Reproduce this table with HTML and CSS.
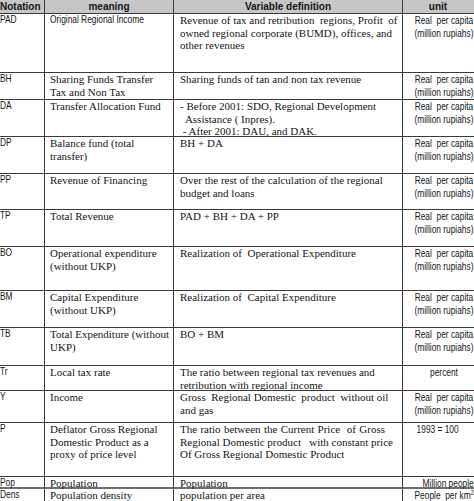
FILE: index.html
```html
<!DOCTYPE html>
<html>
<head>
<meta charset="utf-8">
<link rel="stylesheet" href="styles.css">
</head>
<body>
<div class="table">
  <div class="c hd n">Notation</div>
  <div class="c hd m">meaning</div>
  <div class="c hd d">Variable definition</div>
  <div class="c hd u">unit</div>

  <div class="c n"><span class="sq">PAD</span></div>
  <div class="c m sans"><span class="sq">Original Regional Income</span></div>
  <div class="c d"><span class="j">Revenue of tax and retribution&nbsp; regions, Profit&nbsp; of</span><span class="j">owned regional corporate (BUMD), offices, and</span>other revenues</div>
  <div class="c u"><span class="sq">Real&nbsp; per capita<br>(million rupiahs)</span></div>

  <div class="c n"><span class="sq">BH</span></div>
  <div class="c m">Sharing Funds Transfer<br>Tax and Non Tax</div>
  <div class="c d">Sharing funds of tan and non tax revenue</div>
  <div class="c u"><span class="sq">Real&nbsp; per capita<br>(million rupiahs)</span></div>

  <div class="c n"><span class="sq">DA</span></div>
  <div class="c m">Transfer Allocation Fund</div>
  <div class="c d">- Before 2001: SDO, Regional Development<br>&nbsp; Assistance ( Inpres).<br>&nbsp;- After 2001: DAU, and DAK.</div>
  <div class="c u"><span class="sq">Real&nbsp; per capita<br>(million rupiahs)</span></div>

  <div class="c n"><span class="sq">DP</span></div>
  <div class="c m">Balance fund (total<br>transfer)</div>
  <div class="c d">BH + DA</div>
  <div class="c u"><span class="sq">Real&nbsp; per capita<br>(million rupiahs)</span></div>

  <div class="c n"><span class="sq">PP</span></div>
  <div class="c m">Revenue of Financing</div>
  <div class="c d">Over the rest of the calculation of the regional<br>budget and loans</div>
  <div class="c u"><span class="sq">Real&nbsp; per capita<br>(million rupiahs)</span></div>

  <div class="c n"><span class="sq">TP</span></div>
  <div class="c m">Total Revenue</div>
  <div class="c d">PAD + BH + DA + PP</div>
  <div class="c u"><span class="sq">Real&nbsp; per capita<br>(million rupiahs)</span></div>

  <div class="c n"><span class="sq">BO</span></div>
  <div class="c m">Operational expenditure<br>(without UKP)</div>
  <div class="c d">Realization of&nbsp; Operational Expenditure</div>
  <div class="c u"><span class="sq">Real&nbsp; per capita<br>(million rupiahs)</span></div>

  <div class="c n"><span class="sq">BM</span></div>
  <div class="c m">Capital Expenditure<br>(without UKP)</div>
  <div class="c d">Realization of&nbsp; Capital Expenditure</div>
  <div class="c u"><span class="sq">Real&nbsp; per capita<br>(million rupiahs)</span></div>

  <div class="c n"><span class="sq">TB</span></div>
  <div class="c m">Total Expenditure (without<br>UKP)</div>
  <div class="c d">BO + BM</div>
  <div class="c u"><span class="sq">Real&nbsp; per capita<br>(million rupiahs)</span></div>

  <div class="c n"><span class="sq">Tr</span></div>
  <div class="c m">Local tax rate</div>
  <div class="c d">The ratio between regional tax revenues and<br>retribution with regional income</div>
  <div class="c u"><span class="sq">percent</span></div>

  <div class="c n"><span class="sq">Y</span></div>
  <div class="c m">Income</div>
  <div class="c d"><span class="j">Gross&nbsp; Regional Domestic&nbsp; product&nbsp; without oil</span>and gas</div>
  <div class="c u"><span class="sq">Real&nbsp; per capita<br>(million rupiahs)</span></div>

  <div class="c n"><span class="sq">P</span></div>
  <div class="c m">Deflator Gross Regional<br>Domestic Product as a<br>proxy of price level</div>
  <div class="c d"><span class="j">The ratio between the Current Price&nbsp; of Gross</span><span class="j">Regional Domestic product&nbsp;&nbsp; with constant price</span>Of Gross Regional Domestic Product</div>
  <div class="c u shift-l"><span class="sq">1993 = 100</span></div>

  <div class="c n pop"><span class="sq">Pop</span></div>
  <div class="c m pop">Population</div>
  <div class="c d pop">Population</div>
  <div class="c u pop shift-r"><span class="sq">Million people</span></div>

  <div class="c n"><span class="sq">Dens</span></div>
  <div class="c m">Population density</div>
  <div class="c d">population per area</div>
  <div class="c u"><span class="sq">People&nbsp; per km<sup>2</sup></span></div>
</div>
</body>
</html>
```
FILE: styles.css
```css
html, body {
  margin: 0;
  padding: 0;
  background: #ffffff;
}
body {
  width: 474px;
  height: 501px;
  overflow: hidden;
  color: #151515;
}
.table {
  display: grid;
  grid-template-columns: 45px 129px 229px 82px;
  grid-template-rows: 14px 59px 27px 37px 37px 36px 37px 44px 37px 38px 25px 32px 54px 12px 19px;
  width: 485px;
}
.c {
  box-sizing: border-box;
  border-right: 1px solid #3a3a3a;
  border-bottom: 1px solid #3a3a3a;
  font-family: "Liberation Serif", "Times New Roman", serif;
  font-size: 11px;
  line-height: 12.5px;
  white-space: nowrap;
  padding: 0 0 0 6px;
}
.c.d {
  padding-right: 17px;
}
.c.pop {
  border-bottom: 2px solid #6e6e6e;
}
.j {
  display: block;
  text-align: justify;
  text-align-last: justify;
}
.sq {
  display: inline-block;
  transform: scaleX(0.82);
  transform-origin: left top;
}
.c.n {
  font-family: "Liberation Sans", Arial, sans-serif;
  font-size: 10.2px;
  line-height: 12.5px;
  padding-left: 0;
}
.c.m {
  padding-left: 5px;
}
.c.sans {
  font-family: "Liberation Sans", Arial, sans-serif;
  font-size: 10.2px;
}
.c.u {
  font-family: "Liberation Sans", Arial, sans-serif;
  font-size: 10.2px;
  line-height: 13px;
  text-align: center;
  padding: 0;
  border-right: none;
}
.c.u .sq {
  transform-origin: center top;
}
.c.u.shift-l {
  padding-right: 12px;
}
.c.u.shift-r {
  padding-left: 8px;
}
.c.hd {
  background: #c6c6c6;
  font-family: "Liberation Sans", Arial, sans-serif;
  font-weight: bold;
  font-size: 10px;
  line-height: 13px;
  text-align: center;
  padding: 0;
}
.c.hd.n {
  text-align: left;
}
.c.hd.u {
  padding-right: 12px;
}
sup {
  font-size: 7px;
  line-height: 0;
  vertical-align: 4px;
}
```
